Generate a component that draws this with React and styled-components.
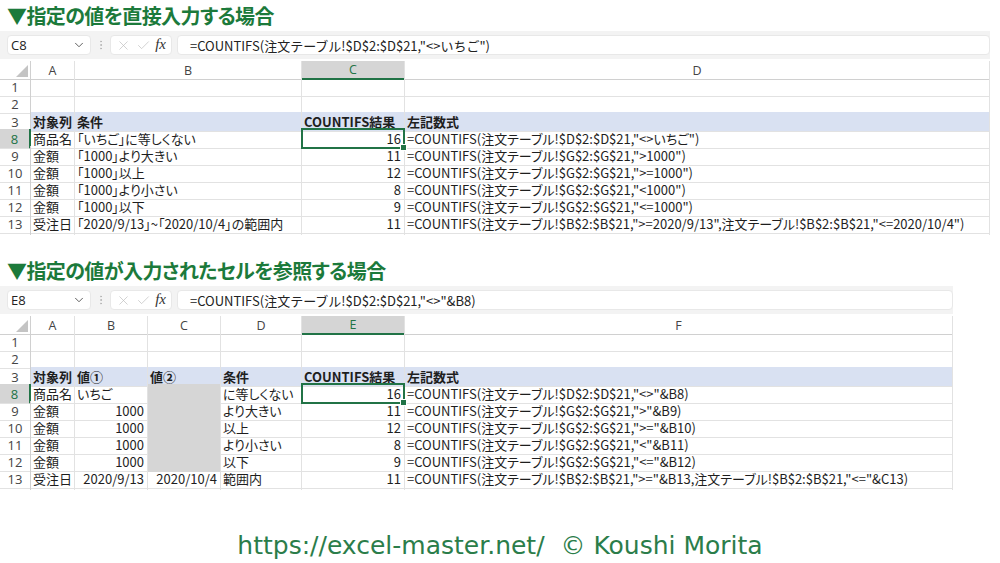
import React from 'react';
import styled, { createGlobalStyle, css } from 'styled-components';
import { ChevronDown, X, Check, EllipsisVertical } from 'lucide-react';

const green = '#217346';
const gridLine = '#e2e2e2';
const headLine = '#d0d0d0';
const cjk = '"Noto Sans CJK JP", sans-serif';

const GlobalStyle = createGlobalStyle`
  body {
    margin: 0;
    background: #fff;
    font-family: ${cjk};
  }
`;

const Page = styled.div`
  width: 1000px;
  height: 563px;
  overflow: hidden;
  display: flex;
  flex-direction: column;
`;

const Section = styled.section`
  width: ${p => p.width}px;
  display: flex;
  flex-direction: column;
  margin-top: ${p => p.gap || 0}px;
`;

const Title = styled.h2`
  margin: 0;
  height: 31px;
  padding-left: 7px;
  display: flex;
  align-items: center;
  font-family: ${cjk};
  font-size: 20px;
  font-weight: 700;
  line-height: 1;
  letter-spacing: -0.6px;
  color: #1c7a3b;
  font-feature-settings: "palt";
`;

const FormulaBar = styled.div`
  height: 28px;
  box-sizing: border-box;
  background: #f3f3f3;
  display: flex;
  align-items: center;
  padding-left: 7px;
`;

const Box = styled.div`
  height: 20px;
  box-sizing: border-box;
  background: #fff;
  border: 1px solid #e8e8e8;
  border-radius: 4px;
  display: flex;
  align-items: center;
`;

const NameBox = styled(Box)`
  width: 84px;
  padding: 0 4px 0 3px;
  justify-content: space-between;
  font-family: "Open Sans", sans-serif;
  font-size: 13px;
  color: #222;
`;

const Dots = styled.div`
  width: 19px;
  display: flex;
  justify-content: center;
  color: #b5b5b5;
`;

const ButtonsBox = styled(Box)`
  width: 62px;
  padding: 0 5px;
  justify-content: space-between;
  color: #bdbdbd;
`;

const Fx = styled.span`
  font-family: "Liberation Serif", serif;
  font-style: italic;
  font-size: 15px;
  color: #333;
  padding-bottom: 2px;
`;

const FormulaInput = styled(Box)`
  flex: 1;
  margin-left: 5px;
  padding-left: 12px;
  font-family: ${cjk};
  font-size: 13px;
  color: #222;
  white-space: nowrap;
`;

const Grid = styled.div`
  display: flex;
  flex-direction: column;
  margin-top: 2px;
`;

const Row = styled.div`
  display: grid;
  grid-template-columns: ${p => p.cols};
  height: ${p => p.h || 17}px;
`;

const Corner = styled.div`
  box-sizing: border-box;
  border-right: 1px solid ${headLine};
  border-bottom: 1px solid ${headLine};
  display: flex;
  align-items: flex-end;
  justify-content: flex-end;
  padding: 0 2px 2px 0;
`;

const ColHead = styled.div`
  box-sizing: border-box;
  border-right: 1px solid ${gridLine};
  border-bottom: 1px solid ${headLine};
  display: flex;
  align-items: center;
  justify-content: center;
  font-family: "Open Sans", sans-serif;
  font-size: 12.5px;
  color: #444;
  ${p => p.active && css`
    background: #d5d5d5;
    color: ${green};
    border-bottom: 2px solid ${green};
  `}
`;

const RowHead = styled.div`
  box-sizing: border-box;
  border-right: 1px solid ${headLine};
  border-bottom: 1px solid ${gridLine};
  display: flex;
  align-items: center;
  justify-content: center;
  font-family: "Open Sans", sans-serif;
  font-size: 13px;
  color: #444;
  ${p => p.active && css`
    background: #d5d5d5;
    color: ${green};
    border-right: 2px solid ${green};
  `}
`;

const Cell = styled.div`
  position: relative;
  box-sizing: border-box;
  border-right: 1px solid ${gridLine};
  border-bottom: 1px solid ${gridLine};
  display: flex;
  align-items: center;
  justify-content: ${p => (p.right ? 'flex-end' : 'flex-start')};
  padding: 0 3px 0 2px;
  font-size: 13px;
  color: #1e1e1e;
  white-space: nowrap;
  font-feature-settings: "palt";
  ${p => p.band && css`
    background: #d9e1f2;
    font-weight: 700;
  `}
  ${p => p.fill && css`
    background: #d6d6d6;
    border-bottom-color: #d6d6d6;
  `}
  ${p => p.selected && css`
    &::after {
      content: '';
      position: absolute;
      inset: -1px -1px -1px -1px;
      border: 2px solid ${green};
      z-index: 1;
    }
    &::before {
      content: '';
      position: absolute;
      right: -3px;
      bottom: -3px;
      width: 5px;
      height: 5px;
      background: ${green};
      border: 1px solid #fff;
      z-index: 2;
    }
  `}
`;

const Tail = styled(Cell)`
  border-bottom: none;
`;

const TailHead = styled(RowHead)`
  border-bottom: none;
`;

const Footer = styled.div`
  margin-top: 38px;
  height: 34px;
  display: flex;
  align-items: center;
  justify-content: center;
  font-family: "DejaVu Sans", sans-serif;
  font-size: 25px;
  color: #2b7d4a;
  white-space: pre;
`;

function Sheet({ cols, letters, active, nameBox, formula, rows }) {
  const template = cols.map(c => `${c}px`).join(' ');
  const width = cols.reduce((a, b) => a + b, 0);
  return (
    <Section width={width}>
      <FormulaBar>
        <NameBox>
          <span>{nameBox}</span>
          <ChevronDown size={14} color="#555" strokeWidth={1.6} />
        </NameBox>
        <Dots>
          <EllipsisVertical size={12} strokeWidth={2} />
        </Dots>
        <ButtonsBox>
          <X size={15} strokeWidth={1.1} />
          <Check size={15} strokeWidth={1.1} />
          <Fx>fx</Fx>
        </ButtonsBox>
        <FormulaInput>{formula}</FormulaInput>
      </FormulaBar>
      <Grid>
        <Row cols={template}>
          <Corner>
            <svg width="12" height="12" viewBox="0 0 12 12">
              <path d="M12 0 L12 12 L0 12 Z" fill="#c4c4c4" />
            </svg>
          </Corner>
          {letters.map((l, i) => (
            <ColHead key={l} active={i === active}>{l}</ColHead>
          ))}
        </Row>
        {rows.map(r => (
          <Row cols={template} key={r.n}>
            <RowHead active={r.n === 8}>{r.n}</RowHead>
            {letters.map((l, i) => {
              const c = (r.cells || [])[i];
              const v = c && typeof c === 'object' ? c : { t: c };
              return (
                <Cell
                  key={l}
                  band={r.band}
                  right={v.right}
                  fill={v.fill}
                  selected={r.n === 8 && i === active}
                >
                  {v.t}
                </Cell>
              );
            })}
          </Row>
        ))}
        <Row cols={template} h={4}>
          <TailHead />
          {letters.map(l => (
            <Tail key={l} />
          ))}
        </Row>
      </Grid>
    </Section>
  );
}

const topRows = [
  { n: 1 },
  { n: 2 },
  { n: 3, band: true, cells: ['対象列', '条件', 'COUNTIFS結果', '左記数式'] },
  { n: 8, cells: ['商品名', '「いちご」に等しくない', { t: '16', right: true }, '=COUNTIFS(注文テーブル!$D$2:$D$21,"<>いちご")'] },
  { n: 9, cells: ['金額', '「1000」より大きい', { t: '11', right: true }, '=COUNTIFS(注文テーブル!$G$2:$G$21,">1000")'] },
  { n: 10, cells: ['金額', '「1000」以上', { t: '12', right: true }, '=COUNTIFS(注文テーブル!$G$2:$G$21,">=1000")'] },
  { n: 11, cells: ['金額', '「1000」より小さい', { t: '8', right: true }, '=COUNTIFS(注文テーブル!$G$2:$G$21,"<1000")'] },
  { n: 12, cells: ['金額', '「1000」以下', { t: '9', right: true }, '=COUNTIFS(注文テーブル!$G$2:$G$21,"<=1000")'] },
  { n: 13, cells: ['受注日', '「2020/9/13」~「2020/10/4」の範囲内', { t: '11', right: true }, '=COUNTIFS(注文テーブル!$B$2:$B$21,">=2020/9/13",注文テーブル!$B$2:$B$21,"<=2020/10/4")'] },
];

const gray = { t: '', fill: true };
const bottomRows = [
  { n: 1 },
  { n: 2 },
  { n: 3, band: true, cells: ['対象列', '値①', '値②', '条件', 'COUNTIFS結果', '左記数式'] },
  { n: 8, cells: ['商品名', 'いちご', gray, 'に等しくない', { t: '16', right: true }, '=COUNTIFS(注文テーブル!$D$2:$D$21,"<>"&B8)'] },
  { n: 9, cells: ['金額', { t: '1000', right: true }, gray, 'より大きい', { t: '11', right: true }, '=COUNTIFS(注文テーブル!$G$2:$G$21,">"&B9)'] },
  { n: 10, cells: ['金額', { t: '1000', right: true }, gray, '以上', { t: '12', right: true }, '=COUNTIFS(注文テーブル!$G$2:$G$21,">="&B10)'] },
  { n: 11, cells: ['金額', { t: '1000', right: true }, gray, 'より小さい', { t: '8', right: true }, '=COUNTIFS(注文テーブル!$G$2:$G$21,"<"&B11)'] },
  { n: 12, cells: ['金額', { t: '1000', right: true }, gray, '以下', { t: '9', right: true }, '=COUNTIFS(注文テーブル!$G$2:$G$21,"<="&B12)'] },
  { n: 13, cells: ['受注日', { t: '2020/9/13', right: true }, { t: '2020/10/4', right: true }, '範囲内', { t: '11', right: true }, '=COUNTIFS(注文テーブル!$B$2:$B$21,">="&B13,注文テーブル!$B$2:$B$21,"<="&C13)'] },
];

export default function App() {
  return (
    <Page>
      <GlobalStyle />
      <Title>▼指定の値を直接入力する場合</Title>
      <Sheet
        cols={[31, 44, 227, 103, 585]}
        letters={['A', 'B', 'C', 'D']}
        active={2}
        nameBox="C8"
        formula={'=COUNTIFS(注文テーブル!$D$2:$D$21,"<>いちご")'}
        rows={topRows}
      />
      <Section gap={20}>
        <Title>▼指定の値が入力されたセルを参照する場合</Title>
      </Section>
      <Sheet
        cols={[31, 44, 73, 73, 81, 103, 548]}
        letters={['A', 'B', 'C', 'D', 'E', 'F']}
        active={4}
        nameBox="E8"
        formula={'=COUNTIFS(注文テーブル!$D$2:$D$21,"<>"&B8)'}
        rows={bottomRows}
      />
      <Footer>https://excel-master.net/  © Koushi Morita</Footer>
    </Page>
  );
}
